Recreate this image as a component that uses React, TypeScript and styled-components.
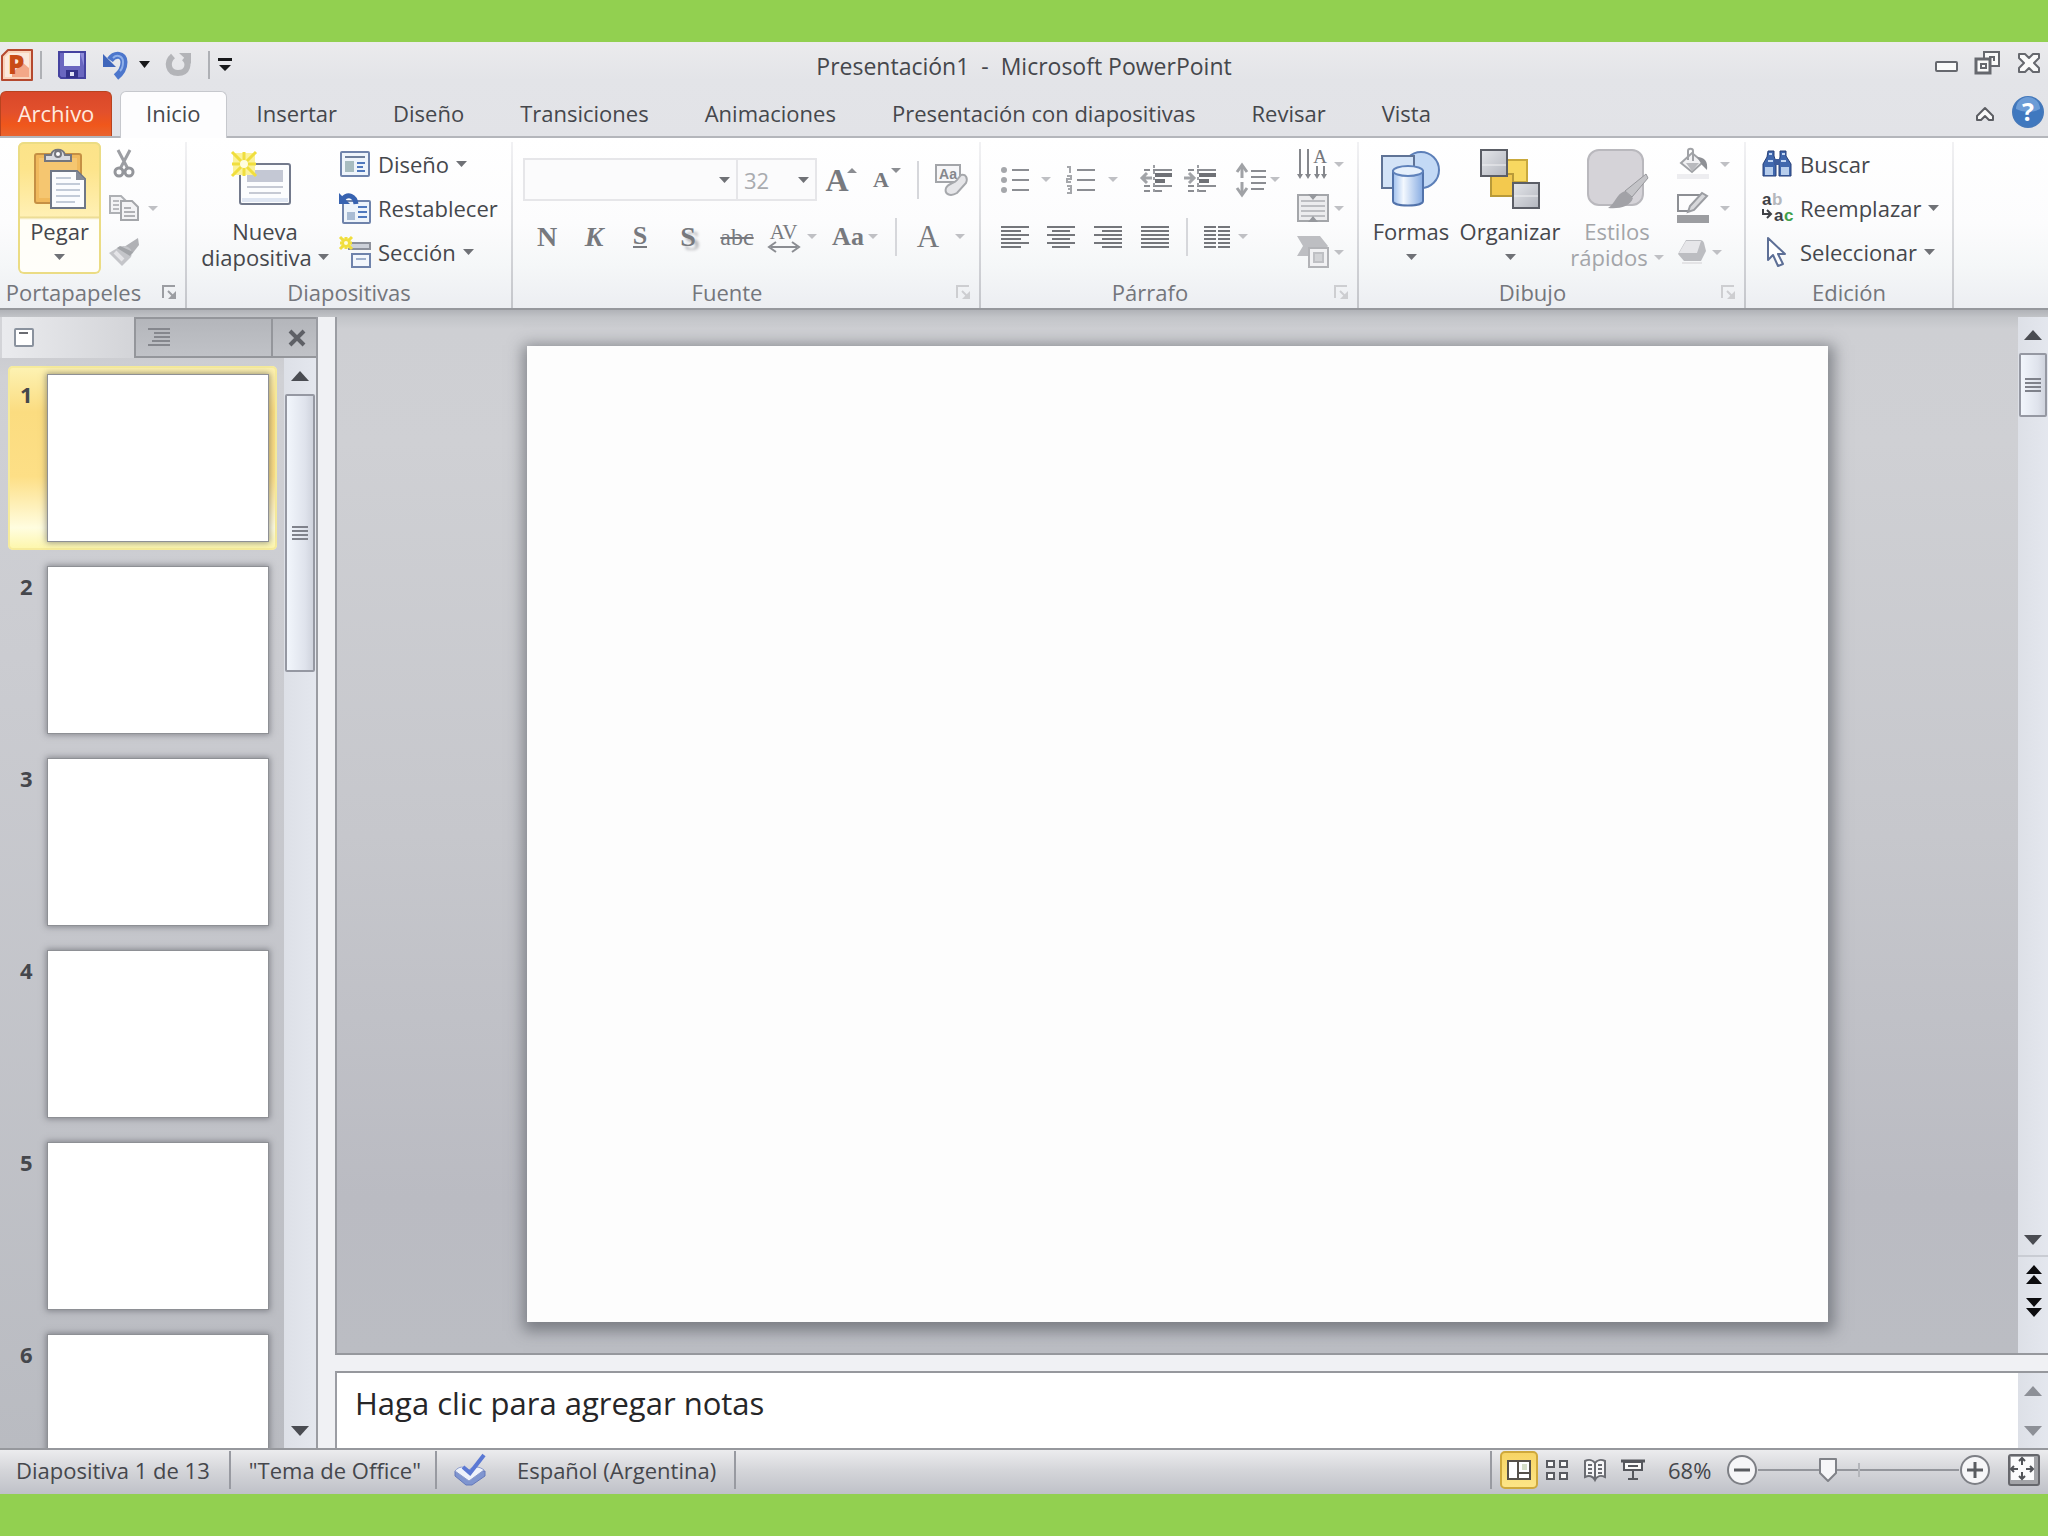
import React, { ReactNode } from "react";
import styled, { createGlobalStyle, css } from "styled-components";

const GlobalStyle = createGlobalStyle`
  * { box-sizing: border-box; }
  body { margin: 0; background: #92d050; }
  button, input, select, textarea { font: inherit; color: inherit; }
  button { margin: 0; padding: 0; border: 0; background: none; cursor: pointer; }
  svg { overflow: visible; }
`;

const ink = "#45474c";
const faded = "#8b8d92";
const serif = `"Liberation Serif", "Times New Roman", serif`;

/* ---------- frame ---------- */

const Page = styled.div`
  display: flex;
  flex-direction: column;
  height: 100vh;
  padding: 42px 0;
  background: #92d050;
  color: ${ink};
  font: 22px/26px "Open Sans", "Noto Sans", sans-serif;
  overflow: hidden;
`;

const TopChrome = styled.header`
  flex: none;
  background: linear-gradient(#ebebed, #e3e4e8 40%, #e2e3e7);
`;

const TitleBar = styled.div`
  display: grid;
  grid-template-columns: 1fr auto 1fr;
  align-items: center;
  height: 49px;
  padding-bottom: 4px;
`;

const QuickAccess = styled.div`
  display: flex;
  align-items: center;
`;

const QuickSep = styled.span`
  width: 2px;
  height: 28px;
  margin: 0 4px 0 6px;
  background: #aeb0b5;
`;

const QuickButton = styled.button<{ $w: number }>`
  display: flex;
  justify-content: center;
  align-items: center;
  width: ${(p) => p.$w}px;
  height: 36px;
`;

const Title = styled.h1`
  margin: 0;
  padding-top: 2px;
  font-size: 23px;
  line-height: 26px;
  font-weight: 400;
  white-space: pre;
`;

const WindowButtons = styled.div`
  display: flex;
  justify-content: flex-end;
  padding-right: 7px;
  gap: 16px;
`;

const TabRow = styled.nav`
  display: flex;
  align-items: stretch;
  height: 47px;
  border-bottom: 2px solid #b4b6bb;
`;

const FileTab = styled.button`
  width: 112px;
  margin-right: 8px;
  padding-bottom: 2px;
  border: 1px solid #b8431f;
  border-bottom: 0;
  border-radius: 6px 6px 0 0;
  background: linear-gradient(#d9482a, #e2502c 45%, #f0571b 75%, #e9642f);
  color: #ffe9de;
`;

const RibbonTab = styled.button<{ $active?: boolean }>`
  padding: 0 28px 2px;
  ${(p) =>
    p.$active &&
    css`
      padding: 0 25px 4px;
      margin: 0 2px -2px 0;
      border: 1px solid #c6c8cd;
      border-bottom: 0;
      border-radius: 6px 6px 0 0;
      background: #fdfdfe;
    `}
`;

const TabTools = styled.div`
  display: flex;
  align-items: center;
  gap: 17px;
  margin-left: auto;
  padding-right: 4px;
`;

/* ---------- ribbon ---------- */

const Ribbon = styled.div`
  display: flex;
  flex: none;
  height: 172px;
  padding-top: 4px;
  background: linear-gradient(#ffffff, #fcfcfd 50%, #f5f7f8 75%, #eceef2);
  border-bottom: 2px solid #96989d;
`;

const GroupBox = styled.section<{ $min: number }>`
  display: flex;
  flex: none;
  flex-direction: column;
  min-width: ${(p) => p.$min}px;
  border-right: 2px solid;
  border-image: linear-gradient(#f2f2f4, #c3c5ca) 1;
`;

const GroupBody = styled.div<{ $left: number }>`
  display: flex;
  flex: 1;
  padding-left: ${(p) => p.$left}px;
`;

const GroupFoot = styled.div`
  display: flex;
  align-items: center;
  height: 33px;
  color: #74767c;
`;

const GroupName = styled.span`
  flex: 1;
  text-align: center;
`;

const Launcher = styled.button`
  display: flex;
  width: 38px;
  padding-left: 14px;
`;

const BigButton = styled.button<{ $w: number; $hot?: boolean; $off?: boolean }>`
  display: flex;
  flex-direction: column;
  align-items: center;
  width: ${(p) => p.$w}px;
  height: 132px;
  color: ${(p) => (p.$off ? "#a3a5a9" : ink)};
  ${(p) =>
    p.$hot &&
    css`
      border-radius: 6px;
      background: linear-gradient(#fbe389, #fde48b 20%, #fff0b4 56%, #ead98c 57%, #fffef8 59%, #fffefa);
      box-shadow: inset 0 0 0 2px #ebdc84;
    `}
`;

const BigIcon = styled.span`
  display: flex;
  align-items: center;
  justify-content: center;
  height: 76px;
  padding-bottom: 2px;
`;

const BigLine = styled.span`
  display: flex;
  align-items: center;
  justify-content: center;
  gap: 6px;
  height: 26px;
`;

const Stack = styled.div<{ $left?: number }>`
  display: flex;
  flex-direction: column;
  padding-left: ${(p) => p.$left ?? 0}px;
`;

const StackButton = styled.button<{ $gap?: number }>`
  display: flex;
  align-items: center;
  gap: ${(p) => p.$gap ?? 7}px;
  height: 44px;
`;

const IconSlot = styled.span`
  display: flex;
  justify-content: center;
  width: 32px;
`;

const Rows = styled.div`
  display: flex;
  flex-direction: column;
  padding-top: 9px;
`;

const Row = styled.div`
  display: flex;
  align-items: center;
  height: 57px;
`;

const ToolButton = styled.button<{ $w: number; $gap?: number; $ml?: number }>`
  display: flex;
  align-items: center;
  justify-content: center;
  gap: ${(p) => p.$gap ?? 7}px;
  width: ${(p) => p.$w}px;
  height: 40px;
  margin-left: ${(p) => p.$ml ?? 0}px;
`;

const Divider = styled.span<{ $m: number }>`
  width: 2px;
  height: 38px;
  margin: 0 ${(p) => p.$m}px;
  background: #d6d7db;
`;

const Glyph = styled.span<{ $size: number; $bold?: boolean; $italic?: boolean }>`
  font-family: ${serif};
  font-size: ${(p) => p.$size}px;
  line-height: 32px;
  font-weight: ${(p) => (p.$bold ? 700 : 400)};
  font-style: ${(p) => (p.$italic ? "italic" : "normal")};
  color: #77797e;
`;

const Underlined = styled(Glyph)`
  line-height: 20px;
  border-bottom: 2px solid #77797e;
`;

const Shadowed = styled(Glyph)`
  text-shadow: 4px 4px 3px #b4b5b9;
`;

const Struck = styled(Glyph)`
  text-decoration: line-through;
`;

const Spaced = styled.span`
  display: flex;
  flex-direction: column;
  align-items: center;
  & > ${Glyph} {
    line-height: 20px;
  }
`;

const Combo = styled.span<{ $w: number }>`
  display: grid;
  align-items: center;
  width: ${(p) => p.$w}px;
  height: 43px;
  border: 2px solid #e6e6e9;
  background: #fbfbfc;
  & + & {
    border-left: 0;
  }
  & > * {
    grid-area: 1 / 1;
  }
  & > svg {
    justify-self: end;
    margin-right: 6px;
    pointer-events: none;
  }
`;

const ComboSelect = styled.select`
  appearance: none;
  width: 100%;
  height: 100%;
  padding: 0 6px;
  border: 0;
  background: transparent;
  color: #a9abaf;
`;

/* ---------- work area ---------- */

const Work = styled.main`
  display: flex;
  flex: 1;
  min-height: 0;
  padding-top: 7px;
  background: linear-gradient(#b0b2b7, #c2c4c8 7px, #f0f1f4 7px);
`;

const SidePane = styled.aside`
  display: flex;
  flex: none;
  flex-direction: column;
  width: 318px;
  border-right: 2px solid #9a9ca2;
  background: linear-gradient(#c4c5ca, #d0d1d5 60px, #cbccd1 30%, #b9bbc1);
`;

const PaneTabs = styled.div`
  display: flex;
  flex: none;
  height: 41px;
`;

const PaneTab = styled.button<{ $active?: boolean; $grow?: boolean }>`
  display: flex;
  align-items: center;
  width: ${(p) => (p.$grow ? "auto" : p.$active ? "134px" : "137px")};
  flex: ${(p) => (p.$grow ? 1 : "none")};
  justify-content: ${(p) => (p.$grow ? "center" : "flex-start")};
  padding-left: ${(p) => (p.$grow ? 4 : 12)}px;
  border: 2px solid #94969b;
  border-right-width: 0;
  background: linear-gradient(#b4b6bb, #c0c2c7);
  ${(p) =>
    p.$active &&
    css`
      border-color: transparent;
      background: linear-gradient(90deg, #eaebee, #d3d4d8);
    `}
`;

const PaneBody = styled.div`
  display: flex;
  flex: 1;
  min-height: 0;
`;

const SlideList = styled.ol`
  flex: 1;
  margin: 0;
  padding: 8px 7px 0 8px;
  list-style: none;
  overflow: hidden;
`;

const SlideItem = styled.li<{ $active?: boolean }>`
  display: flex;
  height: 184px;
  margin-bottom: 8px;
  padding: 8px;
  border-radius: 5px;
  ${(p) =>
    p.$active &&
    css`
      background: linear-gradient(#fdf3b4, #fbdc80 25%, #fddf86 60%, #fffde0 88%, #fdf6a8);
      box-shadow: inset 0 0 0 2px #f6eb9c;
    `}
`;

const SlideNumber = styled.span`
  width: 31px;
  padding: 7px 0 0 4px;
  font-weight: 700;
`;

const Thumb = styled.button`
  flex: 1;
  background: #fff;
  border: 1px solid #8e9095;
  box-shadow: 0 0 6px 1px rgba(70, 72, 80, 0.5);
`;

const Scrollbar = styled.div<{ $w: number }>`
  display: flex;
  flex: none;
  flex-direction: column;
  width: ${(p) => p.$w}px;
  background: linear-gradient(90deg, #dde0e7, #e4e7ee);
`;

const Arrow = styled.button<{ $h: number; $ruled?: boolean }>`
  display: flex;
  flex: none;
  align-items: center;
  justify-content: center;
  height: ${(p) => p.$h}px;
  border-bottom: ${(p) => (p.$ruled ? "2px solid #c9ccd3" : "0")};
`;

const Grip = styled.div<{ $h: number }>`
  display: flex;
  flex: none;
  align-items: center;
  justify-content: center;
  height: ${(p) => p.$h}px;
  margin: 0 1px;
  border: 2px solid #9598a2;
  border-radius: 2px;
  background: linear-gradient(90deg, #f2f6fc, #dfe3ec 70%, #cfd3dd);
`;

const Track = styled.div`
  flex: 1;
`;

const ScrollTail = styled.div`
  height: 32px;
  flex: none;
`;

const Splitter = styled.div`
  width: 17px;
  flex: none;
`;

const Editor = styled.div`
  display: flex;
  flex: 1;
  flex-direction: column;
  min-width: 0;
`;

const Stage = styled.div`
  display: flex;
  flex: 1;
  min-height: 0;
  border-left: 2px solid #9b9da3;
  border-bottom: 2px solid #96989d;
`;

const Canvas = styled.div`
  display: flex;
  flex: 1;
  justify-content: center;
  padding: 29px 0 31px;
  background: linear-gradient(#c2c4c8, #cecfd3 12px, #cfd0d4 12%, #c6c7cc 50%, #babbc2 85%, #bbbdc3);
`;

const Slide = styled.div`
  aspect-ratio: 4 / 3;
  background: #fdfdfd;
  box-shadow: 1px 4px 14px 5px rgba(70, 72, 80, 0.55);
`;

const Notes = styled.div`
  display: flex;
  flex: none;
  height: 77px;
  margin-top: 16px;
  border-top: 2px solid #96989d;
  border-left: 2px solid #9b9da3;
  background: #fff;
`;

const NotesText = styled.textarea`
  flex: 1;
  padding: 11px 18px;
  border: 0;
  resize: none;
  overflow: hidden;
  font-size: 31px;
  line-height: 38px;
  color: #222;
  background: transparent;
  &::placeholder {
    color: #262628;
    opacity: 1;
  }
`;

/* ---------- status bar ---------- */

const StatusBar = styled.footer`
  display: flex;
  flex: none;
  align-items: center;
  height: 46px;
  padding: 0 8px 4px 16px;
  border-top: 2px solid #96989d;
  background: linear-gradient(#ececee, #d5d6da 45%, #bfc1c8);
`;

const StatusSep = styled.span<{ $l: number; $r: number }>`
  width: 2px;
  height: 38px;
  margin: 0 ${(p) => p.$r}px 0 ${(p) => p.$l}px;
  background: #989aa1;
`;

const StatusText = styled.button`
  height: 38px;
  white-space: nowrap;
`;

const SpellButton = styled.button`
  display: flex;
  margin-right: 30px;
`;

const StatusRight = styled.div`
  display: flex;
  align-items: center;
  margin-left: auto;
`;

const ViewButton = styled.button<{ $active?: boolean }>`
  display: flex;
  align-items: center;
  justify-content: center;
  width: 38px;
  height: 38px;
  ${(p) =>
    p.$active &&
    css`
      border: 2px solid #cfa93c;
      border-radius: 5px;
      background: linear-gradient(#f7d565, #fde587);
    `}
`;

const ZoomValue = styled.button`
  width: 42px;
  margin: 0 16px;
`;

const RoundButton = styled.button`
  display: flex;
`;

const thumbShape = `url("data:image/svg+xml,%3Csvg xmlns='http://www.w3.org/2000/svg' width='20' height='26' viewBox='0 0 20 26'%3E%3Cpath d='M2 2H18V16L10 24L2 16Z' fill='%23f6f6f8' stroke='%23808288' stroke-width='2' stroke-linejoin='round'/%3E%3C/svg%3E")`;

const ZoomRange = styled.input`
  appearance: none;
  width: 201px;
  height: 28px;
  margin: 0;
  background: linear-gradient(#b4b6bb, #b4b6bb) 50% 50% / 2px 14px no-repeat,
    linear-gradient(#94969c, #94969c) 0 50% / 100% 2px no-repeat;
  &::-webkit-slider-thumb {
    appearance: none;
    width: 20px;
    height: 26px;
    background: ${thumbShape} no-repeat;
  }
`;

const FitButton = styled.button`
  display: flex;
  margin-left: 17px;
`;

/* ---------- drawings ---------- */

const Svg = ({ w, h, children }: { w: number; h: number; children: ReactNode }) => (
  <svg width={w} height={h} viewBox={`0 0 ${w} ${h}`} fill="none" aria-hidden="true">
    {children}
  </svg>
);

const Caret = ({ c = "#6f7176", w = 11, h = 6 }: { c?: string; w?: number; h?: number }) => (
  <Svg w={w} h={h}>
    <path d={`M0 0H${w}L${w / 2} ${h}Z`} fill={c} />
  </Svg>
);
const PaleCaret = () => <Caret c="#bfc0c4" w={10} h={5} />;

const ArrowUp = ({ c = "#4a4c52" }: { c?: string }) => (
  <Svg w={18} h={10}><path d="M0 10H18L9 0Z" fill={c} /></Svg>
);
const ArrowDown = ({ c = "#4a4c52" }: { c?: string }) => (
  <Svg w={18} h={10}><path d="M0 0H18L9 10Z" fill={c} /></Svg>
);
const DoubleUp = () => (
  <Svg w={14} h={20}><path d="M0 9H16L8 0ZM0 19H16L8 10Z" fill="#0c0c0e" /></Svg>
);
const DoubleDown = () => (
  <Svg w={14} h={20}><path d="M0 1H16L8 10ZM0 11H16L8 20Z" fill="#0c0c0e" /></Svg>
);
const GripLines = () => (
  <Svg w={16} h={16}><path d="M0 2H16M0 6H16M0 10H16M0 14H16" stroke="#7f828b" strokeWidth="2" /></Svg>
);

const AppIcon = () => (
  <Svg w={34} h={34}>
    <path d="M8 2H32V32H2V8Z" fill="#f9d3bb" stroke="#b5492f" strokeWidth="2" strokeLinejoin="round" />
    <path d="M9 5H29V29H5V9Z" fill="#fbe9dc" />
    <path d="M22 14L29 20V29H12V26Z" fill="#f3a888" />
    <text x="8" y="26" fontFamily="Open Sans, sans-serif" fontWeight="800" fontSize="26" fill="#c94b16">P</text>
  </Svg>
);
const SaveIcon = () => (
  <Svg w={28} h={28}>
    <path d="M1 1H27V27H3L1 25Z" fill="#6a67c0" stroke="#4543a0" strokeWidth="2" />
    <path d="M6 2H22V15H6Z" fill="#eef3fb" />
    <path d="M22 2H26V15Z" fill="#8f8dda" />
    <path d="M8 19H20V27H8Z" fill="#34328a" />
    <path d="M12 21H16V25H12Z" fill="#dfe1f5" />
  </Svg>
);
const UndoIcon = () => (
  <Svg w={28} h={28}>
    <path d="M9 9C14 2 23 3 23 11C23 18 20 22 15 26" stroke="#4c76cc" strokeWidth="7" />
    <path d="M2 3V16H15Z" fill="#3f66bb" />
    <path d="M12 7C16 3 22 5 22 11C22 15 21 18 19 20" stroke="#8fb0ea" strokeWidth="2" />
  </Svg>
);
const RedoIcon = () => (
  <Svg w={28} h={28}>
    <path d="M8 5C1 11 3 22 13 22C23 22 25 12 19 7" stroke="#b3b4b8" strokeWidth="6" />
    <path d="M14 2H26V13Z" fill="#b3b4b8" />
  </Svg>
);
const CustomizeIcon = () => (
  <Svg w={16} h={14}>
    <path d="M1 0H15V3H1ZM2 7H14L8 13Z" fill="#17181a" />
  </Svg>
);
const MinimizeIcon = () => (
  <Svg w={24} h={24}><rect x="1" y="11" width="21" height="9" rx="1" fill="#fafafa" stroke="#66686e" strokeWidth="2" /></Svg>
);
const RestoreIcon = () => (
  <Svg w={26} h={24}>
    <path d="M9 1H24V15H9Z" fill="#fafafa" stroke="#66686e" strokeWidth="2" />
    <path d="M14 6H19V10" stroke="#66686e" strokeWidth="2" />
    <path d="M1 8H15V22H1Z" fill="#fafafa" stroke="#66686e" strokeWidth="3" />
    <path d="M6 13H11V17H6Z" stroke="#66686e" strokeWidth="2" />
  </Svg>
);
const CloseIcon = () => (
  <Svg w={24} h={24}>
    <path d="M2 3H8L12 7L16 3H22V7L17 12L22 17V21H16L12 17L8 21H2V17L7 12L2 7Z" fill="#fafafa" stroke="#66686e" strokeWidth="2" strokeLinejoin="round" />
  </Svg>
);
const CollapseIcon = () => (
  <Svg w={20} h={16}>
    <path d="M10 1L18 9V13H14L10 9L6 13H2V9Z" fill="#fafafa" stroke="#5c5e63" strokeWidth="2" strokeLinejoin="round" />
  </Svg>
);
const HelpIcon = () => (
  <Svg w={32} h={34}>
    <circle cx="16" cy="17" r="15" fill="#3f78bf" stroke="#4478ba" strokeWidth="2" />
    <path d="M4 14A12 12 0 0 1 28 14Q16 20 4 14Z" fill="#6c9cd6" />
    <text x="16" y="26" textAnchor="middle" fontFamily="Open Sans, sans-serif" fontWeight="700" fontSize="25" fill="#fff">?</text>
  </Svg>
);
const LauncherIcon = ({ c = "#9b9da2" }: { c?: string }) => (
  <Svg w={16} h={16}>
    <path d="M2 14V2H14" stroke={c} strokeWidth="2" />
    <path d="M7 7L12 12" stroke={c} strokeWidth="2" />
    <path d="M15 7V15H7Z" fill={c} />
  </Svg>
);

const PasteIcon = () => (
  <Svg w={54} h={62}>
    <rect x="2" y="6" width="46" height="49" rx="2" fill="#f0b95c" stroke="#c59044" strokeWidth="2" />
    <path d="M6 10H44V50H6Z" fill="#f5c670" />
    <path d="M12 13V7H18C19 0 31 0 32 7H38V13Z" fill="#d8dae0" stroke="#74767e" strokeWidth="2" />
    <circle cx="25" cy="6" r="3" fill="#fff" stroke="#74767e" strokeWidth="2" />
    <path d="M18 23H44L52 31V60H18Z" fill="#fbfcfe" stroke="#6f7787" strokeWidth="2" />
    <path d="M43 23V32H52Z" fill="#858b98" />
    <path d="M23 30H38M23 36H47M23 42H47M23 48H47M23 54H42" stroke="#c3cbd8" strokeWidth="2" />
  </Svg>
);
const CutIcon = () => (
  <Svg w={22} h={30}>
    <path d="M5 1L15 20M17 1L7 20" stroke="#9c9ea3" strokeWidth="3" />
    <circle cx="6" cy="23" r="4" stroke="#94969b" strokeWidth="3" />
    <circle cx="16" cy="23" r="4" stroke="#94969b" strokeWidth="3" />
  </Svg>
);
const CopyIcon = () => (
  <Svg w={30} h={26}>
    <path d="M1 1H12L17 6V18H1Z" fill="#f3f3f5" stroke="#aeb0b4" strokeWidth="2" />
    <path d="M4 6H10M4 10H10M4 14H10" stroke="#b9babe" strokeWidth="2" />
    <path d="M12 6H23L29 12V25H12Z" fill="#f3f3f5" stroke="#a4a6aa" strokeWidth="2" />
    <path d="M15 13H22M15 17H26M15 21H26" stroke="#b0b1b5" strokeWidth="2" />
  </Svg>
);
const BrushIcon = () => (
  <Svg w={30} h={28}>
    <path d="M29 0L30 7L23 16L15 9Z" fill="#b0b1b5" />
    <path d="M10 9C18 6 25 11 22 19L13 28L0 15Z" fill="#c4c5c9" />
    <path d="M11 8L24 14L21 18L8 10Z" fill="#a2a4a8" />
    <path d="M6 14L14 22" stroke="#e4e4e7" strokeWidth="4" />
  </Svg>
);
const Spark = ({ x, y, r }: { x: number; y: number; r: number }) => (
  <g stroke="#f0de3e" strokeWidth="3">
    <rect x={x - r + 1} y={y - r + 1} width={2 * r - 2} height={2 * r - 2} fill="#fbf29a" stroke="none" />
    <path d={`M${x} ${y - r}V${y + r}M${x - r} ${y}H${x + r}M${x - r} ${y - r}L${x + r} ${y + r}M${x + r} ${y - r}L${x - r} ${y + r}`} />
    <circle cx={x} cy={y} r={r / 3} fill="#fffde0" stroke="none" />
  </g>
);
const NewSlideIcon = () => (
  <Svg w={68} h={56}>
    <rect x="9" y="13" width="50" height="40" rx="2" fill="#fcfdfe" stroke="#737a8c" strokeWidth="2" />
    <path d="M16 19H52V31H16Z" fill="#c4c8d4" />
    <path d="M16 36H52M18 42H50" stroke="#c6cad4" strokeWidth="2" />
    <path d="M11 47H57V51H11Z" fill="#dfe6f2" />
    <Spark x={13} y={13} r={12} />
  </Svg>
);
const LayoutIcon = () => (
  <Svg w={30} h={26}>
    <rect x="1" y="1" width="28" height="24" rx="1" fill="#eef4fb" stroke="#6f83ab" strokeWidth="2" />
    <path d="M5 6H25" stroke="#6e7f9c" strokeWidth="2" />
    <path d="M5 10H14V21H5Z" fill="#a7bcc0" />
    <path d="M17 12H25M17 16H23M17 20H25" stroke="#4f78bd" strokeWidth="2" />
  </Svg>
);
const ResetIcon = () => (
  <Svg w={32} h={32}>
    <rect x="4" y="9" width="27" height="22" rx="1" fill="#eef4fb" stroke="#6f83ab" strokeWidth="2" />
    <path d="M8 20H16V28H8Z" fill="#a9bcd4" />
    <path d="M19 15H28M19 20H28M19 25H28" stroke="#4f78bd" strokeWidth="2" />
    <path d="M4 7C9 1 16 4 17 12" stroke="#3762b0" strokeWidth="5" />
    <path d="M0 1V12H11Z" fill="#3762b0" />
  </Svg>
);
const SectionIcon = () => (
  <Svg w={32} h={32}>
    <rect x="10" y="7" width="21" height="6" fill="#cdd1d9" stroke="#8d919b" strokeWidth="2" />
    <rect x="13" y="18" width="18" height="13" fill="#f3f7fc" stroke="#6f83ab" strokeWidth="2" />
    <path d="M17 23H27" stroke="#9fb0cc" strokeWidth="2" />
    <Spark x={7} y={7} r={6} />
  </Svg>
);
const ClearFormatIcon = () => (
  <Svg w={34} h={34}>
    <rect x="2" y="2" width="24" height="17" fill="#f6f6f8" stroke="#a3a5a9" strokeWidth="2" />
    <text x="14" y="16" textAnchor="middle" fontFamily="Liberation Sans, sans-serif" fontWeight="700" fontSize="14" fill="#85878c">Aa</text>
    <path d="M12 25C14 20 20 21 23 17L27 12C32 11 34 15 32 20L23 30C16 34 10 31 12 25Z" fill="#e6e6e9" stroke="#a6a8ac" strokeWidth="2" />
  </Svg>
);
const SpacingArrow = () => (
  <Svg w={32} h={10}>
    <path d="M3 5H29" stroke={faded} strokeWidth="2" />
    <path d="M8 0L1 5L8 10M24 0L31 5L24 10" stroke={faded} strokeWidth="2" />
  </Svg>
);
const BulletsIcon = () => (
  <Svg w={28} h={28}>
    <circle cx="3" cy="4" r="3" fill="#a5a7ab" /><circle cx="3" cy="14" r="3" fill="#a5a7ab" /><circle cx="3" cy="24" r="3" fill="#a5a7ab" />
    <path d="M11 4H28M11 14H28M11 24H28" stroke="#8c8e93" strokeWidth="2" />
  </Svg>
);
const NumbersIcon = () => (
  <Svg w={30} h={30}>
    <path d="M1 2H4V8M1 11H5V14H1V17H5M1 21H5V28H1M2 24H5" stroke="#a5a7ab" strokeWidth="2" />
    <path d="M11 5H29M11 15H29M11 25H29" stroke="#8c8e93" strokeWidth="2" />
  </Svg>
);
const IndentIcon = ({ inward }: { inward?: boolean }) => (
  <Svg w={32} h={32}>
    <path d="M4 6H10M13 6H32M4 22H10M13 22H32M4 27H10M13 27H22" stroke={faded} strokeWidth="2" />
    <path d="M15 11H32" stroke="#6f7176" strokeWidth="4" />
    <path d="M15 17H25" stroke="#6f7176" strokeWidth="4" />
    <path d="M14 1V31" stroke="#9c9ea3" strokeWidth="2" strokeDasharray="3 3" />
    <path d={inward ? "M0 14H10M5 9L10 14L5 19" : "M12 14H2M7 9L2 14L7 19"} stroke="#a1a3a7" strokeWidth="3" />
  </Svg>
);
const LineSpacingIcon = () => (
  <Svg w={32} h={32}>
    <path d="M6 3V14M6 18V30" stroke="#a0a2a6" strokeWidth="3" />
    <path d="M1 8L6 1L11 8M1 24L6 31L11 24" stroke="#a0a2a6" strokeWidth="3" />
    <path d="M15 7H30M15 13H30M15 19H30M15 25H28" stroke={faded} strokeWidth="2" />
  </Svg>
);
const TextDirectionIcon = () => (
  <Svg w={32} h={32}>
    <path d="M3 1V28M11 1V28M20 18V28M27 18V28" stroke="#85878c" strokeWidth="2" />
    <path d="M0 26H6L3 31ZM8 26H14L11 31ZM17 26H23L20 31ZM24 26H30L27 31Z" fill="#85878c" />
    <text x="23" y="15" textAnchor="middle" fontFamily="Liberation Serif, serif" fontSize="19" fill="#75777c">A</text>
  </Svg>
);
const TextAlignIcon = () => (
  <Svg w={32} h={32}>
    <rect x="1" y="3" width="30" height="26" fill="#ececee" stroke="#a4a6aa" strokeWidth="2" />
    <path d="M4 9H28M4 14H28M4 19H28M4 24H28" stroke="#bdbec2" strokeWidth="2" />
    <path d="M11 2H21L16 8ZM11 30H21L16 24Z" fill="#96989d" />
  </Svg>
);
const SmartArtIcon = () => (
  <Svg w={32} h={32}>
    <path d="M0 0H23L31 10L23 20H0L6 10Z" fill="#bdbec2" />
    <rect x="12" y="12" width="19" height="19" fill="#f1f1f3" stroke="#b2b3b7" strokeWidth="2" />
    <rect x="17" y="17" width="9" height="9" fill="#d2d3d6" stroke="#bfc0c4" strokeWidth="2" />
  </Svg>
);
type Line = [number, number];
const AlignIcon = ({ lines }: { lines: Line[] }) => (
  <Svg w={28} h={24}>
    {lines.map(([from, to], i) => (
      <path key={i} d={`M${from} ${2 + i * 4}H${to}`} stroke="#74767b" strokeWidth="2" />
    ))}
  </Svg>
);
const leftLines: Line[] = [[0, 28], [0, 20], [0, 28], [0, 20], [0, 28], [0, 20]];
const centerLines: Line[] = [[0, 28], [5, 23], [0, 28], [5, 23], [0, 28], [5, 23]];
const rightLines: Line[] = [[0, 28], [8, 28], [0, 28], [8, 28], [0, 28], [8, 28]];
const fullLines: Line[] = [[0, 28], [0, 28], [0, 28], [0, 28], [0, 28], [0, 28]];
const ColumnsIcon = () => (
  <Svg w={28} h={24}>
    {[2, 6, 10, 14, 18, 22].map((y) => (
      <path key={y} d={`M1 ${y}H13M15 ${y}H27`} stroke="#74767b" strokeWidth="2" />
    ))}
  </Svg>
);

const ShapesIcon = () => (
  <Svg w={60} h={58}>
    <defs>
      <linearGradient id="tube" x1="0" x2="1">
        <stop offset="0" stopColor="#9fc0ee" /><stop offset=".35" stopColor="#f3f8fe" /><stop offset="1" stopColor="#86abe2" />
      </linearGradient>
    </defs>
    <circle cx="40" cy="20" r="18" fill="#c3d9f5" stroke="#5c7fb8" strokeWidth="2" />
    <path d="M1 6H33V38H1Z" fill="#d3e3f7" stroke="#5f7396" strokeWidth="2" />
    <path d="M12 21V51C12 57 42 57 42 51V21Z" fill="url(#tube)" stroke="#5273ab" strokeWidth="2" />
    <ellipse cx="27" cy="21" rx="15" ry="5" fill="#e6f0fc" stroke="#5f82bb" strokeWidth="2" />
  </Svg>
);
const ArrangeIcon = () => (
  <Svg w={62} h={62}>
    <defs>
      <linearGradient id="plate" x1="0" y1="0" x2="1" y2="1">
        <stop offset="0" stopColor="#e4e6ea" /><stop offset="1" stopColor="#b3b6be" />
      </linearGradient>
    </defs>
    <path d="M24 12H48V34H24Z" fill="#f8d860" stroke="#c9a93c" strokeWidth="2" />
    <path d="M12 26H34V48H12Z" fill="#f3c94e" stroke="#b99a38" strokeWidth="2" />
    <path d="M2 2H28V28H2Z" fill="url(#plate)" stroke="#5b5e66" strokeWidth="2" />
    <path d="M34 35H60V60H34Z" fill="url(#plate)" stroke="#5b5e66" strokeWidth="2" />
    <path d="M3 17H27M35 48H59" stroke="#f0f1f3" strokeWidth="1" />
  </Svg>
);
const QuickStylesIcon = () => (
  <Svg w={62} h={62}>
    <rect x="2" y="2" width="55" height="55" rx="11" fill="#d5d3d8" stroke="#b9b8bd" strokeWidth="2" />
    <path d="M60 26L62 30L46 49L39 43Z" fill="#c4c4c8" stroke="#96979b" strokeWidth="1" />
    <path d="M39 43L47 50C44 59 33 61 22 60C29 56 30 46 39 43Z" fill="#a2a2a7" />
  </Svg>
);
const FillIcon = () => (
  <Svg w={32} h={32}>
    <path d="M4 15L15 5L26 14L15 24Z" fill="#f1f1f3" stroke="#a0a2a6" strokeWidth="2" />
    <path d="M9 15H22L15 23Z" fill="#b9babe" />
    <path d="M11 12V3C11 0 16 0 16 3V13" stroke="#a0a2a6" strokeWidth="2" />
    <path d="M20 9C28 9 31 14 30 22L25 17Z" fill="#8e9095" />
    <path d="M0 26H32V31H0Z" fill="#ededf0" />
  </Svg>
);
const OutlineIcon = () => (
  <Svg w={34} h={32}>
    <path d="M24 3H2V19H12" stroke="#8d8f94" strokeWidth="2" />
    <path d="M12 20L14 14L26 1L31 4L18 18Z" fill="#d7d8db" stroke="#9b9da2" strokeWidth="2" />
    <path d="M1 23H33V31H1Z" fill="#9c9da1" />
  </Svg>
);
const EffectsIcon = () => (
  <Svg w={30} h={26}>
    <path d="M9 1H23Q26 1 27 4L29 12L24 22H7L1 15Z" fill="#bcbdc1" />
    <path d="M9 2H24L20 14H2Z" fill="#e6e6e9" />
    <path d="M5 24H25" stroke="#e4e4e6" strokeWidth="2" />
  </Svg>
);
const FindIcon = () => (
  <Svg w={30} h={28}>
    <path d="M6 1H12V6L14 12V26H1V14L5 7ZM18 1H24V6L29 14V26H17V12L18 7Z" fill="#4067ad" stroke="#263f77" strokeWidth="1" />
    <path d="M12 9H18V15H12Z" fill="#3d5c9b" />
    <path d="M3 17H11V25H3ZM19 17H27V25H19Z" fill="#b7cdec" />
    <path d="M7 4H10M20 4H23M6 11H11M19 11H24" stroke="#c3d6f2" strokeWidth="2" />
  </Svg>
);
const ReplaceIcon = () => (
  <Svg w={32} h={32}>
    <g fontFamily="Liberation Sans, sans-serif" fontWeight="700" fontSize="17">
      <text x="1" y="13" fill="#3f4146">a</text>
      <text x="11" y="13" fill="#b5b7bc">b</text>
      <text x="13" y="29" fill="#3f4146">a</text>
      <text x="23" y="29" fill="#3fa04c">c</text>
    </g>
    <path d="M2 17V22H9M6 18L10 22L6 26" stroke="#3f4146" strokeWidth="2" />
  </Svg>
);
const SelectIcon = () => (
  <Svg w={22} h={32}>
    <path d="M2 2V24L7 19L12 30L17 28L12 18H19Z" fill="#fff" stroke="#5d6f96" strokeWidth="2" strokeLinejoin="round" />
  </Svg>
);

const SlidesTabIcon = () => (
  <Svg w={20} h={20}>
    <rect x="1" y="1" width="18" height="17" rx="1" fill="#fff" stroke="#8a929e" strokeWidth="2" />
    <path d="M5 5H14" stroke="#6a6c72" strokeWidth="2" />
  </Svg>
);
const OutlineTabIcon = () => (
  <Svg w={22} h={20}>
    <path d="M0 1H22M6 5H22M6 9H22M4 13H22M0 17H22" stroke="#85878d" strokeWidth="2" />
  </Svg>
);
const PaneCloseIcon = () => (
  <Svg w={18} h={18}><path d="M2 2L16 16M16 2L2 16" stroke="#5e6066" strokeWidth="4" /></Svg>
);
const SpellIcon = () => (
  <Svg w={34} h={32}>
    <path d="M2 17V22L13 31H19L32 22V17Z" fill="#7f95d0" stroke="#6479ba" strokeWidth="1" />
    <path d="M2 17C6 12 11 12 16 16C20 12 26 12 31 16L16 27Z" fill="#eef2fb" stroke="#8b9bcb" strokeWidth="1" />
    <path d="M10 13L17 19L31 1" stroke="#5a78d4" strokeWidth="4" />
  </Svg>
);
const NormalViewIcon = () => (
  <Svg w={24} h={20}>
    <path d="M1 1H23V19H1Z" fill="#fff" stroke="#55504a" strokeWidth="2" />
    <path d="M11 1V19M11 13H23" stroke="#55504a" strokeWidth="2" />
    <path d="M15 4H20V10H15Z" fill="#d7dfc8" />
  </Svg>
);
const SorterIcon = () => (
  <Svg w={24} h={22}>
    <path d="M2 2H9V8H2ZM15 2H22V8H15ZM2 14H9V20H2ZM15 14H22V20H15Z" fill="#fafafa" stroke="#595b61" strokeWidth="2" />
  </Svg>
);
const ReadingIcon = () => (
  <Svg w={24} h={24}>
    <path d="M2 3C6 1 10 2 12 5C14 2 18 1 22 3V19C18 17 14 18 12 22C10 18 6 17 2 19Z" fill="#f6f6f8" stroke="#6a6c72" strokeWidth="2" />
    <path d="M12 5V21M5 7H9M5 11H9M5 15H9M15 7H19M15 11H19M15 15H19" stroke="#6a6c72" strokeWidth="2" />
  </Svg>
);
const ShowIcon = () => (
  <Svg w={24} h={22}>
    <path d="M0 2H24" stroke="#55575d" strokeWidth="3" />
    <path d="M3 3H21V11H3Z" fill="#fafafa" stroke="#55575d" strokeWidth="2" />
    <path d="M7 7H17M12 12V19M7 20H17" stroke="#55575d" strokeWidth="2" />
  </Svg>
);
const RoundSign = ({ plus }: { plus?: boolean }) => (
  <Svg w={32} h={32}>
    <circle cx="16" cy="16" r="14" fill="#f6f6f8" stroke="#7d7f85" strokeWidth="2" />
    <path d={plus ? "M8 16H24M16 8V24" : "M8 16H24"} stroke="#5a5c61" strokeWidth="3" />
  </Svg>
);
const FitIcon = () => (
  <Svg w={32} h={32}>
    <rect x="1" y="1" width="30" height="30" rx="2" fill="#a3a4a8" stroke="#66676c" strokeWidth="2" />
    <path d="M3 3H26V26H3Z" fill="#fbfbfc" />
    <path d="M14 4V11M14 18V25M3 15H10M18 15H25M11 7L14 4L17 7M11 22L14 25L17 22M6 12L3 15L6 18M22 12L25 15L22 18" stroke="#515358" strokeWidth="2" />
  </Svg>
);

/* ---------- composed parts ---------- */

type GroupProps = { name: string; min: number; left: number; launcher?: "on" | "off"; children: ReactNode };
const Group = ({ name, min, left, launcher, children }: GroupProps) => (
  <GroupBox $min={min} aria-label={name}>
    <GroupBody $left={left}>{children}</GroupBody>
    <GroupFoot>
      <GroupName>{name}</GroupName>
      {launcher && (
        <Launcher aria-label={`Opciones de ${name}`}>
          <LauncherIcon c={launcher === "on" ? "#9b9da2" : "#cdced1"} />
        </Launcher>
      )}
    </GroupFoot>
  </GroupBox>
);

const tabs = ["Insertar", "Diseño", "Transiciones", "Animaciones", "Presentación con diapositivas", "Revisar", "Vista"];

export default function App() {
  return (
    <>
      <GlobalStyle />
      <Page>
        <TopChrome>
          <TitleBar>
            <QuickAccess>
              <QuickButton $w={34} aria-label="PowerPoint"><AppIcon /></QuickButton>
              <QuickSep />
              <QuickButton $w={52} aria-label="Guardar"><SaveIcon /></QuickButton>
              <QuickButton $w={34} aria-label="Deshacer"><UndoIcon /></QuickButton>
              <QuickButton $w={24} aria-label="Opciones de deshacer"><Caret c="#17181a" w={11} h={7} /></QuickButton>
              <QuickButton $w={46} aria-label="Repetir"><RedoIcon /></QuickButton>
              <QuickSep />
              <QuickButton $w={22} aria-label="Personalizar barra"><CustomizeIcon /></QuickButton>
            </QuickAccess>
            <Title>{"Presentación1  -  Microsoft PowerPoint"}</Title>
            <WindowButtons>
              <button aria-label="Minimizar"><MinimizeIcon /></button>
              <button aria-label="Restaurar"><RestoreIcon /></button>
              <button aria-label="Cerrar"><CloseIcon /></button>
            </WindowButtons>
          </TitleBar>
          <TabRow>
            <FileTab>Archivo</FileTab>
            <RibbonTab $active>Inicio</RibbonTab>
            {tabs.map((t) => (
              <RibbonTab key={t}>{t}</RibbonTab>
            ))}
            <TabTools>
              <button aria-label="Minimizar cinta"><CollapseIcon /></button>
              <button aria-label="Ayuda"><HelpIcon /></button>
            </TabTools>
          </TabRow>
        </TopChrome>

        <Ribbon>
          <Group name="Portapapeles" min={187} left={18} launcher="on">
            <BigButton $w={83} $hot>
              <BigIcon><PasteIcon /></BigIcon>
              <BigLine>Pegar</BigLine>
              <BigLine><Caret /></BigLine>
            </BigButton>
            <Stack $left={7}>
              <StackButton aria-label="Cortar"><IconSlot><CutIcon /></IconSlot></StackButton>
              <StackButton $gap={8} aria-label="Copiar"><IconSlot><CopyIcon /></IconSlot><PaleCaret /></StackButton>
              <StackButton aria-label="Copiar formato"><IconSlot><BrushIcon /></IconSlot></StackButton>
            </Stack>
          </Group>

          <Group name="Diapositivas" min={326} left={12}>
            <BigButton $w={132}>
              <BigIcon><NewSlideIcon /></BigIcon>
              <BigLine>Nueva</BigLine>
              <BigLine>diapositiva <Caret /></BigLine>
            </BigButton>
            <Stack $left={8}>
              <StackButton><IconSlot><LayoutIcon /></IconSlot>Diseño<Caret /></StackButton>
              <StackButton><IconSlot><ResetIcon /></IconSlot>Restablecer</StackButton>
              <StackButton><IconSlot><SectionIcon /></IconSlot>Sección<Caret /></StackButton>
            </Stack>
          </Group>

          <Group name="Fuente" min={468} left={10} launcher="off">
            <Rows>
              <Row>
                <Combo $w={215}>
                  <ComboSelect aria-label="Fuente"><option></option></ComboSelect>
                  <Caret />
                </Combo>
                <Combo $w={79}>
                  <ComboSelect aria-label="Tamaño de fuente"><option>32</option></ComboSelect>
                  <Caret />
                </Combo>
                <ToolButton $w={48} $gap={0} aria-label="Agrandar fuente">
                  <Glyph $size={32} $bold>A</Glyph>
                  <Svg w={8} h={24}><path d="M-2 5H8L3 0Z" fill={faded} /></Svg>
                </ToolButton>
                <ToolButton $w={44} $gap={2} aria-label="Reducir fuente">
                  <Glyph $size={22} $bold>A</Glyph>
                  <Svg w={10} h={24}><path d="M0 0H10L5 5Z" fill={faded} /></Svg>
                </ToolButton>
                <Divider $m={8} />
                <ToolButton $w={48} aria-label="Borrar formato"><ClearFormatIcon /></ToolButton>
              </Row>
              <Row>
                <ToolButton $w={48} aria-label="Negrita"><Glyph $size={28} $bold>N</Glyph></ToolButton>
                <ToolButton $w={46} aria-label="Cursiva"><Glyph $size={28} $bold $italic>K</Glyph></ToolButton>
                <ToolButton $w={46} aria-label="Subrayado"><Underlined $size={26} $bold>S</Underlined></ToolButton>
                <ToolButton $w={50} aria-label="Sombra"><Shadowed $size={28} $bold>S</Shadowed></ToolButton>
                <ToolButton $w={48} aria-label="Tachado"><Struck $size={24}>abc</Struck></ToolButton>
                <ToolButton $w={62} aria-label="Espaciado entre caracteres">
                  <Spaced><Glyph $size={21}>AV</Glyph><SpacingArrow /></Spaced>
                  <PaleCaret />
                </ToolButton>
                <ToolButton $w={64} $gap={4} aria-label="Cambiar mayúsculas y minúsculas">
                  <Glyph $size={26} $bold>Aa</Glyph><PaleCaret />
                </ToolButton>
                <Divider $m={8} />
                <ToolButton $w={72} $gap={16} aria-label="Color de fuente">
                  <Glyph $size={31}>A</Glyph><PaleCaret />
                </ToolButton>
              </Row>
            </Rows>
          </Group>

          <Group name="Párrafo" min={378} left={11} launcher="off">
            <Rows>
              <Row>
                <ToolButton $w={68} $gap={12} aria-label="Viñetas"><BulletsIcon /><PaleCaret /></ToolButton>
                <ToolButton $w={64} $gap={12} aria-label="Numeración"><NumbersIcon /><PaleCaret /></ToolButton>
                <ToolButton $w={44} $ml={10} aria-label="Disminuir nivel"><IndentIcon /></ToolButton>
                <ToolButton $w={44} aria-label="Aumentar nivel"><IndentIcon inward /></ToolButton>
                <ToolButton $w={72} $gap={2} aria-label="Interlineado"><LineSpacingIcon /><PaleCaret /></ToolButton>
              </Row>
              <Row>
                <ToolButton $w={46} aria-label="Alinear a la izquierda"><AlignIcon lines={leftLines} /></ToolButton>
                <ToolButton $w={46} aria-label="Centrar"><AlignIcon lines={centerLines} /></ToolButton>
                <ToolButton $w={48} aria-label="Alinear a la derecha"><AlignIcon lines={rightLines} /></ToolButton>
                <ToolButton $w={46} aria-label="Justificar"><AlignIcon lines={fullLines} /></ToolButton>
                <Divider $m={8} />
                <ToolButton $w={58} aria-label="Columnas"><ColumnsIcon /><PaleCaret /></ToolButton>
              </Row>
            </Rows>
            <Stack $left={3}>
              <StackButton $gap={5} aria-label="Dirección del texto"><TextDirectionIcon /><PaleCaret /></StackButton>
              <StackButton $gap={5} aria-label="Alinear texto"><TextAlignIcon /><PaleCaret /></StackButton>
              <StackButton $gap={5} aria-label="Convertir a SmartArt"><SmartArtIcon /><PaleCaret /></StackButton>
            </Stack>
          </Group>

          <Group name="Dibujo" min={387} left={8} launcher="off">
            <BigButton $w={88}>
              <BigIcon><ShapesIcon /></BigIcon>
              <BigLine>Formas</BigLine>
              <BigLine><Caret /></BigLine>
            </BigButton>
            <BigButton $w={110}>
              <BigIcon><ArrangeIcon /></BigIcon>
              <BigLine>Organizar</BigLine>
              <BigLine><Caret /></BigLine>
            </BigButton>
            <BigButton $w={104} $off>
              <BigIcon><QuickStylesIcon /></BigIcon>
              <BigLine>Estilos</BigLine>
              <BigLine>rápidos <PaleCaret /></BigLine>
            </BigButton>
            <Stack $left={8}>
              <StackButton $gap={11} aria-label="Relleno de forma"><IconSlot><FillIcon /></IconSlot><PaleCaret /></StackButton>
              <StackButton $gap={11} aria-label="Contorno de forma"><IconSlot><OutlineIcon /></IconSlot><PaleCaret /></StackButton>
              <StackButton $gap={5} aria-label="Efectos de forma"><EffectsIcon /><PaleCaret /></StackButton>
            </Stack>
          </Group>

          <Group name="Edición" min={208} left={15}>
            <Stack>
              <StackButton><IconSlot><FindIcon /></IconSlot>Buscar</StackButton>
              <StackButton><IconSlot><ReplaceIcon /></IconSlot>Reemplazar<Caret /></StackButton>
              <StackButton><IconSlot><SelectIcon /></IconSlot>Seleccionar<Caret /></StackButton>
            </Stack>
          </Group>
        </Ribbon>

        <Work>
          <SidePane>
            <PaneTabs>
              <PaneTab $active aria-label="Diapositivas"><SlidesTabIcon /></PaneTab>
              <PaneTab aria-label="Esquema"><OutlineTabIcon /></PaneTab>
              <PaneTab $grow aria-label="Cerrar panel"><PaneCloseIcon /></PaneTab>
            </PaneTabs>
            <PaneBody>
              <SlideList>
                {[1, 2, 3, 4, 5, 6].map((n) => (
                  <SlideItem key={n} $active={n === 1}>
                    <SlideNumber>{n}</SlideNumber>
                    <Thumb aria-label={`Diapositiva ${n}`} />
                  </SlideItem>
                ))}
              </SlideList>
              <Scrollbar $w={32}>
                <Arrow $h={36} aria-label="Subir"><ArrowUp /></Arrow>
                <Grip $h={278}><GripLines /></Grip>
                <Track />
                <Arrow $h={34} aria-label="Bajar"><ArrowDown /></Arrow>
              </Scrollbar>
            </PaneBody>
          </SidePane>
          <Splitter />
          <Editor>
            <Stage>
              <Canvas><Slide /></Canvas>
              <Scrollbar $w={30}>
                <Arrow $h={36} aria-label="Subir"><ArrowUp /></Arrow>
                <Grip $h={64}><GripLines /></Grip>
                <Track />
                <Arrow $h={32} $ruled aria-label="Bajar"><ArrowDown /></Arrow>
                <Arrow $h={36} aria-label="Diapositiva anterior"><DoubleUp /></Arrow>
                <Arrow $h={28} aria-label="Diapositiva siguiente"><DoubleDown /></Arrow>
                <ScrollTail />
              </Scrollbar>
            </Stage>
            <Notes>
              <NotesText aria-label="Notas" placeholder="Haga clic para agregar notas" />
              <Scrollbar $w={30}>
                <Arrow $h={36} aria-label="Subir"><ArrowUp c="#8d9097" /></Arrow>
                <Track />
                <Arrow $h={34} aria-label="Bajar"><ArrowDown c="#8d9097" /></Arrow>
              </Scrollbar>
            </Notes>
          </Editor>
        </Work>

        <StatusBar>
          <StatusText>Diapositiva 1 de 13</StatusText>
          <StatusSep $l={19} $r={18} />
          <StatusText>"Tema de Office"</StatusText>
          <StatusSep $l={14} $r={16} />
          <SpellButton aria-label="Ortografía"><SpellIcon /></SpellButton>
          <StatusText>Español (Argentina)</StatusText>
          <StatusSep $l={18} $r={0} />
          <StatusRight>
            <StatusSep $l={0} $r={8} />
            <ViewButton $active aria-label="Normal"><NormalViewIcon /></ViewButton>
            <ViewButton aria-label="Clasificador"><SorterIcon /></ViewButton>
            <ViewButton aria-label="Vista de lectura"><ReadingIcon /></ViewButton>
            <ViewButton aria-label="Presentación"><ShowIcon /></ViewButton>
            <ZoomValue>68%</ZoomValue>
            <RoundButton aria-label="Alejar"><RoundSign /></RoundButton>
            <ZoomRange type="range" aria-label="Zoom" min={0} max={100} defaultValue={33} />
            <RoundButton aria-label="Acercar"><RoundSign plus /></RoundButton>
            <FitButton aria-label="Ajustar a la ventana"><FitIcon /></FitButton>
          </StatusRight>
        </StatusBar>
      </Page>
    </>
  );
}
